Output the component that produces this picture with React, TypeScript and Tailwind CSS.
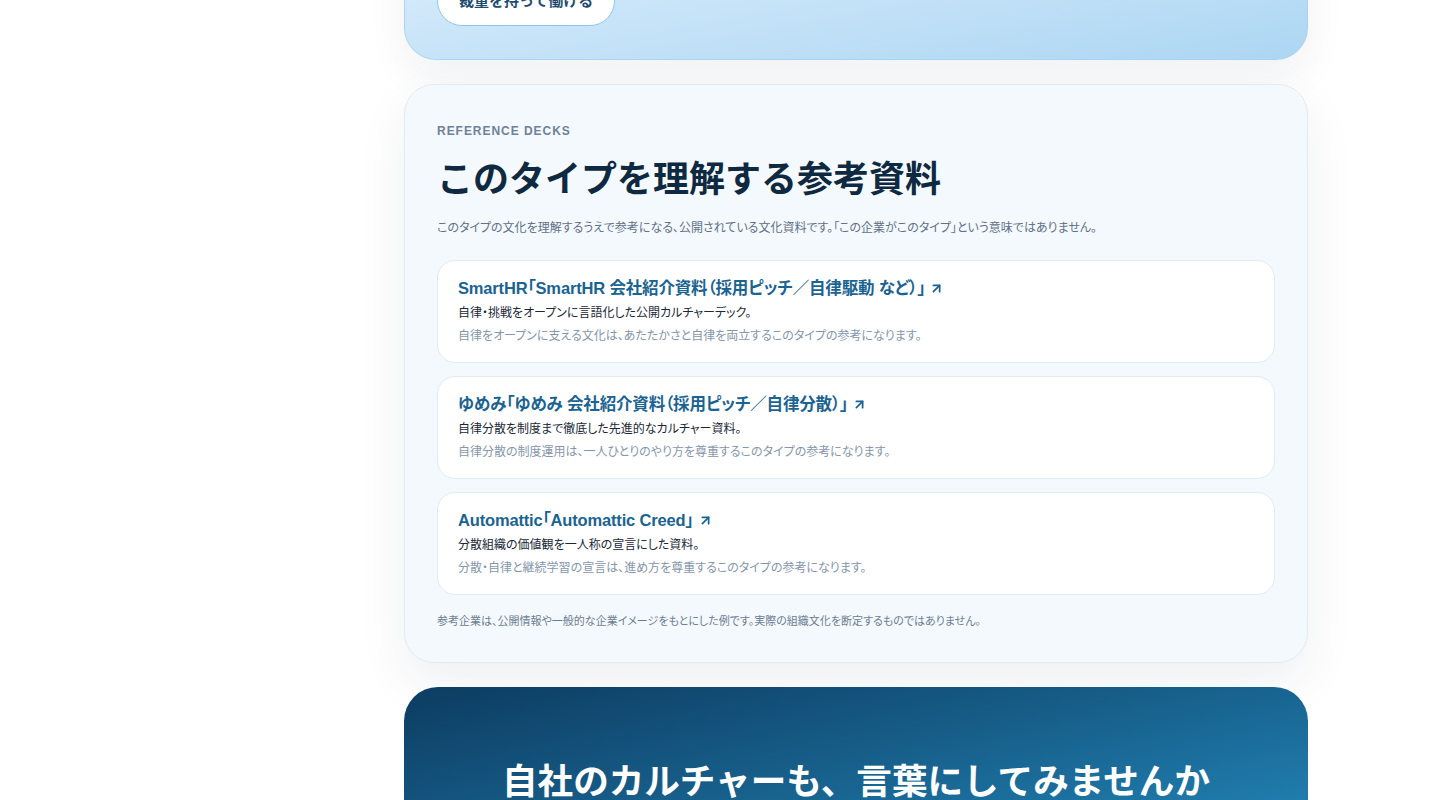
import { ArrowUpRight } from "lucide-react";

const FONT = { fontFamily: '"Liberation Sans", "Noto Sans CJK JP", sans-serif' };

interface Deck {
  title: string;
  summary: string;
  note: string;
}

const decks: Deck[] = [
  {
    title: "SmartHR「SmartHR 会社紹介資料（採用ピッチ／自律駆動 など）」",
    summary: "自律・挑戦をオープンに言語化した公開カルチャーデック。",
    note: "自律をオープンに支える文化は、あたたかさと自律を両立するこのタイプの参考になります。",
  },
  {
    title: "ゆめみ「ゆめみ 会社紹介資料（採用ピッチ／自律分散）」",
    summary: "自律分散を制度まで徹底した先進的なカルチャー資料。",
    note: "自律分散の制度運用は、一人ひとりのやり方を尊重するこのタイプの参考になります。",
  },
  {
    title: "Automattic「Automattic Creed」",
    summary: "分散組織の価値観を一人称の宣言にした資料。",
    note: "分散・自律と継続学習の宣言は、進め方を尊重するこのタイプの参考になります。",
  },
];

function DeckCard({ deck }: { deck: Deck }) {
  return (
    <a
      href="#"
      className="block rounded-[18px] border border-[#e1ebf4] bg-white px-5 pt-[15px] pb-[16px]"
    >
      <div className="flex items-center gap-[5px] text-[16.5px] font-bold leading-6 tracking-[-0.01em] text-[#1b6391] [font-feature-settings:'palt']">
        <span>{deck.title}</span>
        <ArrowUpRight size={15} strokeWidth={2.8} className="-ml-[1px]" />
      </div>
      <p className="mt-[3px] text-[12px] leading-5 text-[#1a2736] [font-feature-settings:'palt']">
        {deck.summary}
      </p>
      <p className="mt-[3px] text-[12px] leading-5 text-[#8596aa] [font-feature-settings:'palt']">
        {deck.note}
      </p>
    </a>
  );
}

export default function App() {
  return (
    <div className="min-h-[800px] overflow-hidden bg-white" style={FONT}>
      <div className="ml-[404px] flex w-[904px] flex-col gap-6">
        {/* top card, scrolled mostly out of view */}
        <div className="-mt-[100px] rounded-[32px] border border-[#a9d4f1] bg-gradient-to-br from-[#e3f1fc] to-[#acd6f3] px-8 pt-[75px] pb-[33px] shadow-[0_18px_40px_rgba(15,42,68,0.06)]">
          <button className="h-[50px] rounded-full border border-[#8ac6ec] bg-white px-[21px] text-[15px] font-bold text-[#1d4c70]">
            裁量を持って働ける
          </button>
        </div>

        {/* REFERENCE DECKS */}
        <section className="rounded-[30px] border border-[#e1ebf5] bg-[#f4f9fd] px-8 pt-[38px] pb-[32px] shadow-[0_20px_50px_rgba(15,42,68,0.07)]">
          <div className="text-[12px] font-semibold leading-4 tracking-[0.08em] text-[#6e819a]">
            REFERENCE DECKS
          </div>
          <h2 className="mt-[17px] text-[36px] font-bold leading-[47px] text-[#0f2940]">
            このタイプを理解する参考資料
          </h2>
          <p className="mt-[15px] text-[12px] leading-5 text-[#5f7087] [font-feature-settings:'palt']">
            このタイプの文化を理解するうえで参考になる、公開されている文化資料です。「この企業がこのタイプ」という意味ではありません。
          </p>
          <div className="mt-[22px] flex flex-col gap-[13px]">
            {decks.map((d) => (
              <DeckCard key={d.title} deck={d} />
            ))}
          </div>
          <p className="mt-[17px] text-[11px] leading-[18px] text-[#6c7d92] [font-feature-settings:'palt']">
            参考企業は、公開情報や一般的な企業イメージをもとにした例です。実際の組織文化を断定するものではありません。
          </p>
        </section>

        {/* CTA */}
        <section className="h-[200px] rounded-[34px] bg-gradient-to-br from-[#0d3c61] to-[#2590c4] pt-[71px] text-center">
          <h2 className="text-[35.6px] font-bold leading-[48px] text-white">
            自社のカルチャーも、言葉にしてみませんか
          </h2>
        </section>
      </div>
    </div>
  );
}
